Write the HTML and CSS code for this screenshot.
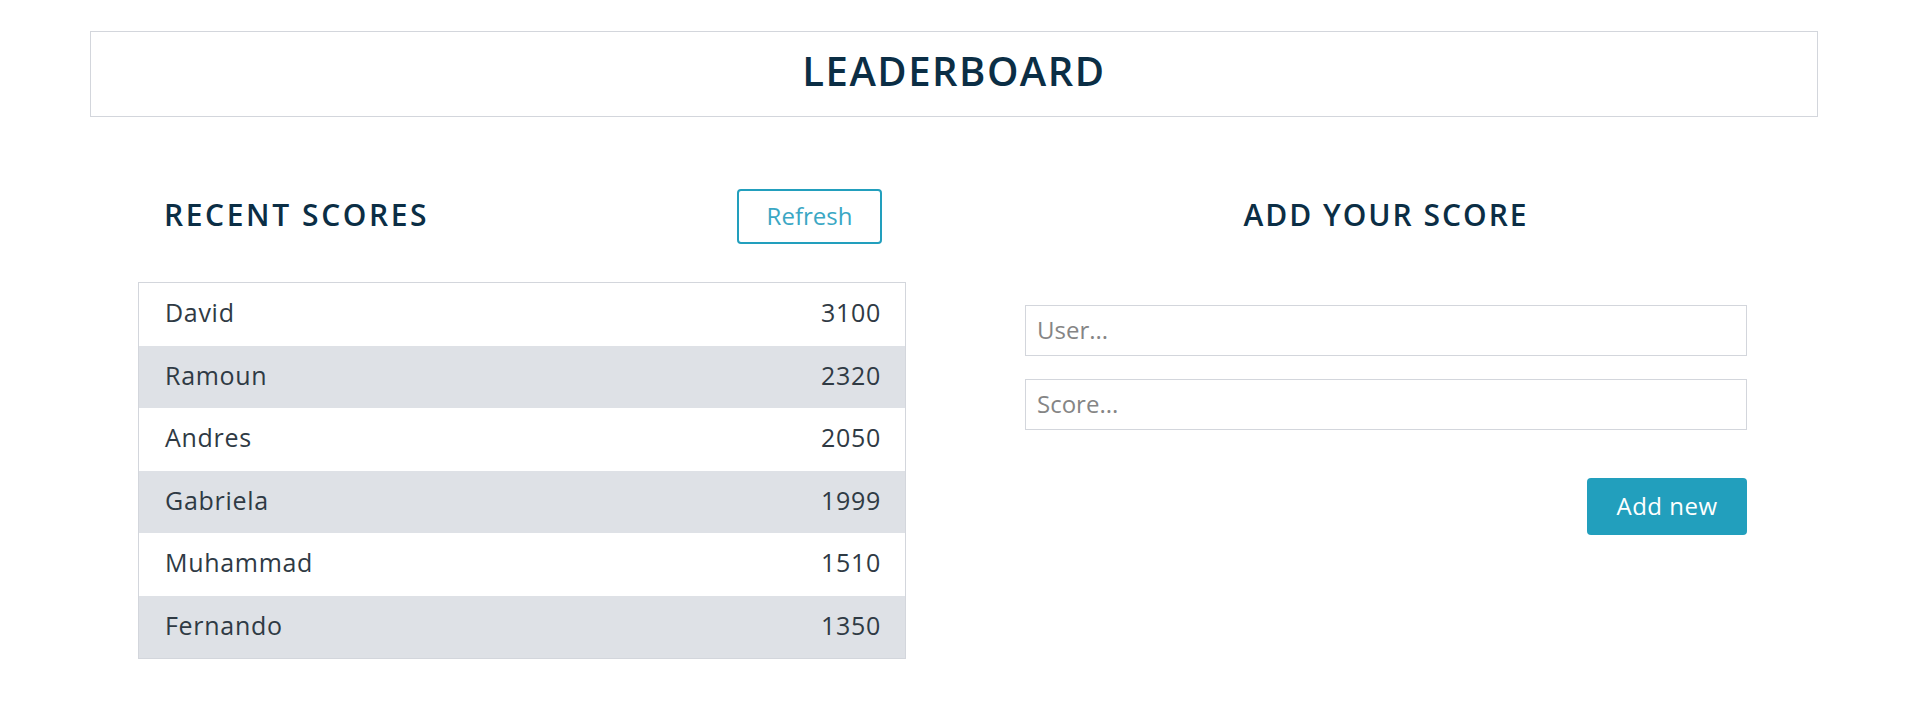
FILE: index.html
```html
<!DOCTYPE html>
<html lang="en">
<head>
<meta charset="utf-8">
<title>Leaderboard</title>
<link rel="stylesheet" href="styles.css">
</head>
<body>
<div class="container">
  <header class="banner">
    <h1 class="banner-title">LEADERBOARD</h1>
  </header>
  <main class="board">
    <section class="scores">
      <div class="scores-head">
        <h2 class="section-title">RECENT SCORES</h2>
        <button class="btn-outline" type="button">Refresh</button>
      </div>
      <ul class="score-list">
        <li class="score-row"><span>David</span><span>3100</span></li>
        <li class="score-row alt"><span>Ramoun</span><span>2320</span></li>
        <li class="score-row"><span>Andres</span><span>2050</span></li>
        <li class="score-row alt"><span>Gabriela</span><span>1999</span></li>
        <li class="score-row"><span>Muhammad</span><span>1510</span></li>
        <li class="score-row alt"><span>Fernando</span><span>1350</span></li>
      </ul>
    </section>
    <section class="add">
      <h2 class="section-title center">ADD YOUR SCORE</h2>
      <form class="add-form">
        <input class="field" type="text" placeholder="User...">
        <input class="field" type="text" placeholder="Score...">
        <div class="actions"><button class="btn-solid" type="button">Add new</button></div>
      </form>
    </section>
  </main>
</div>
</body>
</html>
```
FILE: styles.css
```css
* { box-sizing: border-box; }
body {
  margin: 0;
  background: #fff;
  font-family: "Open Sans", "Liberation Sans", sans-serif;
  color: #2b3640;
}
.container {
  width: 1728px;
  margin: 31px 0 0 90px;
}
.banner {
  height: 86px;
  border: 1px solid #d3d6dc;
  display: flex;
  align-items: center;
  justify-content: center;
  padding-bottom: 8px;
}
.banner-title {
  margin: 0;
  font-size: 40px;
  font-weight: 600;
  letter-spacing: 1.5px;
  color: #0b2e45;
}
.board {
  display: grid;
  grid-template-columns: 1fr 1fr;
  margin-top: 72px;
}
.scores { padding: 0 48px; }
.scores-head {
  display: flex;
  justify-content: space-between;
  align-items: center;
  padding: 0 24px 0 26px;
  height: 55px;
}
.section-title {
  margin: 0;
  padding-bottom: 4px;
  font-size: 30px;
  font-weight: 600;
  letter-spacing: 2.6px;
  color: #0b2e45;
}
.section-title.center {
  text-align: center;
  line-height: 51px;
  letter-spacing: 2px;
}
.btn-outline {
  width: 145px;
  height: 55px;
  border: 2px solid #229fbd;
  border-radius: 4px;
  background: #fff;
  color: #3aa7c4;
  font-family: inherit;
  font-size: 24px;
  padding-bottom: 3px;
}
.score-list {
  list-style: none;
  margin: 38px 0 0;
  padding: 0;
  border: 1px solid #d3d6dc;
}
.score-row {
  display: flex;
  justify-content: space-between;
  align-items: center;
  height: 62.5px;
  padding: 0 24px 4px 26px;
  font-size: 25px;
  letter-spacing: 0.7px;
  color: #2f3a44;
}
.score-row.alt { background: #dee1e6; }
.add { padding: 0 71px; }
.add-form {
  display: flex;
  flex-direction: column;
  gap: 23px;
  margin-top: 61px;
}
.field {
  height: 51px;
  border: 1px solid #d3d6dc;
  padding: 0 11px 3px;
  font-family: inherit;
  font-size: 24px;
  color: #333;
}
.field::placeholder { color: #858585; }
.actions {
  display: flex;
  justify-content: flex-end;
  margin-top: 25px;
}
.btn-solid {
  width: 160px;
  height: 57px;
  border: none;
  border-radius: 4px;
  background: #229fbd;
  color: #fff;
  font-family: inherit;
  font-size: 24px;
  letter-spacing: 0.5px;
  padding-bottom: 3px;
}
```
